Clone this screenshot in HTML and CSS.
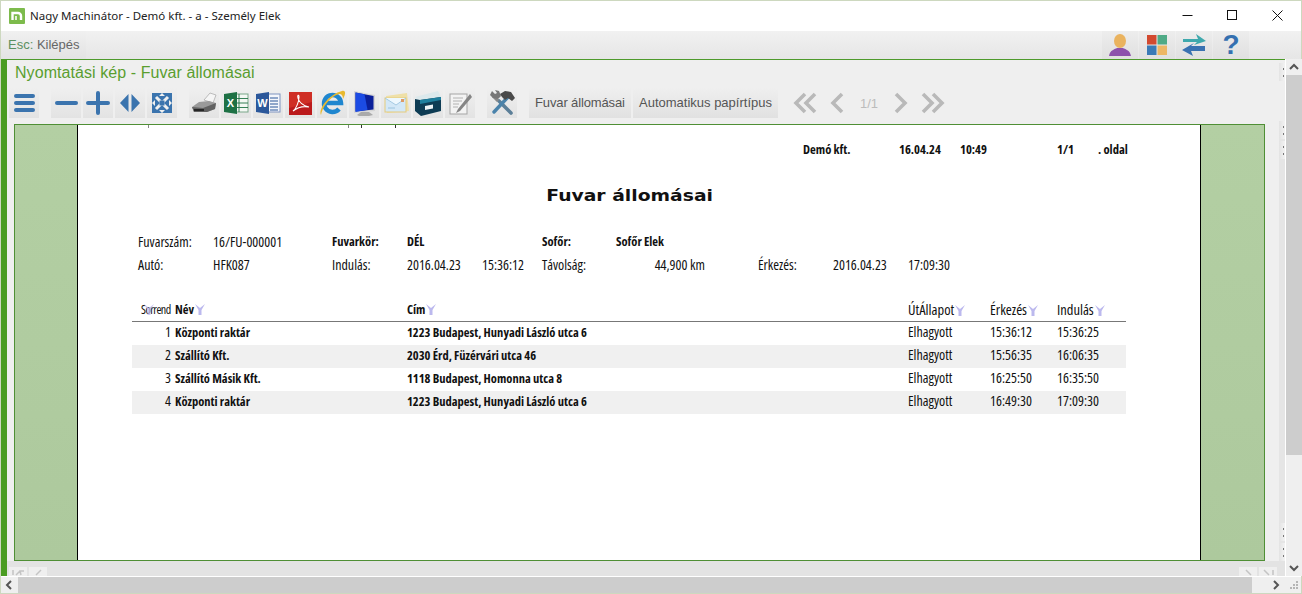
FILE: index.html
```html
<!DOCTYPE html>
<html lang="hu">
<head>
<meta charset="utf-8">
<title>Nagy Machinátor</title>
<link rel="stylesheet" href="styles.css">
</head>
<body>
<div class="window">
  <header class="titlebar">
    <svg class="app-icon" viewBox="0 0 16 16"><rect width="16" height="16" rx="1" fill="#7dbb4c"/><path d="M3.500 12V5h5.500a3 3 0 0 1 3 3v4" fill="none" stroke="#fff" stroke-width="2.400"/><path d="M7 12V8" stroke="#fff" stroke-width="1.600"/></svg>
    <span class="app-title">Nagy Machinátor - Demó kft. - a - Személy Elek</span>
    <div class="win-buttons">
      <span class="win-btn"><svg viewBox="0 0 45 30" width="45" height="30"><path d="M17.500 14.500h10" stroke="#111"/></svg></span>
      <span class="win-btn"><svg viewBox="0 0 45 30" width="45" height="30"><rect x="17.500" y="9.500" width="9" height="9" fill="none" stroke="#111"/></svg></span>
      <span class="win-btn"><svg viewBox="0 0 45 30" width="45" height="30"><path d="M17.500 9.500l10 10m0-10l-10 10" stroke="#111" fill="none"/></svg></span>
    </div>
  </header>

  <nav class="menubar">
    <span class="esc-btn"><span class="esc-key">Esc:</span> Kilépés</span>
    <div class="menu-icons">
      <span class="menu-icon"><svg viewBox="0 0 36 28" width="36" height="28"><ellipse cx="18" cy="10" rx="6" ry="7" fill="#eab35f"/><path d="M7 25c1-6 6-7 8-8h6c2 1 7 2 8 8z" fill="#8d52ac"/></svg></span>
      <span class="menu-icon"><svg viewBox="0 0 36 28" width="36" height="28"><rect x="8" y="4" width="9.500" height="9.500" fill="#d2492f"/><rect x="18.500" y="4" width="9.500" height="9.500" fill="#4faa86"/><rect x="8" y="14.500" width="9.500" height="9.500" fill="#3a7ab6"/><rect x="18.500" y="14.500" width="9.500" height="9.500" fill="#edb765"/></svg></span>
      <span class="menu-icon"><svg viewBox="0 0 36 28" width="36" height="28"><path d="M7 8h15l-2-5 10 7-12 4 3-3H7z" fill="#3fa9ad"/><path d="M29 15H15l3-3-12 7 11 6-2-5h14z" fill="#3a72b2"/></svg></span>
      <span class="menu-icon q-mark">?</span>
    </div>
  </nav>

  <div class="workspace">
    <main class="main">
      <div class="main-row">
        <div class="main-left">
          <div class="panel-top">
            <h1 class="panel-title">Nyomtatási kép - Fuvar állomásai</h1>
            <div class="toolbar">
              <span class="tb-btn"><svg viewBox="0 0 30 30"><g stroke="#3b74ae" stroke-width="4" stroke-linecap="round"><path d="M7 8h17M7 15h17M7 22h17"/></g></svg></span>
              <span class="tb-btn tb-first"><svg viewBox="0 0 30 30"><path d="M6 15h19" stroke="#3b74ae" stroke-width="4" stroke-linecap="round"/></svg></span>
              <span class="tb-btn"><svg viewBox="0 0 30 30"><path d="M5 15h20M15 5v20" stroke="#3b74ae" stroke-width="4" stroke-linecap="round"/></svg></span>
              <span class="tb-btn"><svg viewBox="0 0 30 30"><path d="M13.500 6v18L5 15zM16.500 6v18L25 15z" fill="#3b74ae"/></svg></span>
              <span class="tb-btn"><svg viewBox="0 0 30 30"><rect x="5" y="5" width="20" height="20" fill="#3b74ae"/><path d="M9 9l12 12M21 9L9 21" stroke="#f0f0f0" stroke-width="3"/><path d="M15 5l3 3h-6zM15 25l3-3h-6zM5 15l3 3v-6zM25 15l-3 3v-6z" fill="#f0f0f0"/><rect x="12.500" y="12.500" width="5" height="5" fill="#3b74ae"/></svg></span>

              <span class="tb-btn tb-first"><svg viewBox="0 0 30 30"><path d="M15 12l6-7 6 2-3 8z" fill="#f5f5f5" stroke="#a5a5a5" stroke-width=".7"/><path d="M3 19l7-5 10-1 7 2-1 6-8 3-13 0z" fill="#9a9a9a"/><path d="M3 19l11 1 13-5-1 6-8 3-13 0z" fill="#616161"/><path d="M5 21h10v2H5z" fill="#262626"/></svg></span>
              <span class="tb-btn"><svg viewBox="0 0 30 30"><rect x="12" y="6" width="15" height="18" fill="#f4f8f4" stroke="#7aa78a"/><path d="M18 6v18M12 10.500h15M12 15h15M12 19.500h15" stroke="#217346" stroke-width=".9"/><path d="M3 6l13-2v22L3 24z" fill="#1e7145"/><text x="9.500" y="19" text-anchor="middle" class="office-letter">X</text></svg></span>
              <span class="tb-btn"><svg viewBox="0 0 30 30"><rect x="12" y="6" width="15" height="18" fill="#f4f6fb" stroke="#7f93bf"/><path d="M17 10h8M17 13h8M17 16h8M17 19h8M17 22h8" stroke="#2b579a" stroke-width="1.200"/><path d="M3 6l13-2v22L3 24z" fill="#2b579a"/><text x="9.500" y="19" text-anchor="middle" class="office-letter">W</text></svg></span>
              <span class="tb-btn"><svg viewBox="0 0 30 30"><rect x="4" y="4" width="23" height="23" fill="#bb1a1c"/><path d="M4 4h23v10L4 20z" fill="#cf2e25"/><path d="M8 23c3-2 6-9 6-14 0-3-2-2-1 1 1 4 5 8 11 9-5-1-11 0-16 4z" fill="none" stroke="#fff" stroke-width="1.100"/></svg></span>
              <span class="tb-btn"><svg viewBox="0 0 30 30"><path d="M7 15h17a8.500 8.500 0 1 0-2 6" fill="none" stroke="#1f86cf" stroke-width="4.500"/><path d="M4 27C1 20 13 6 25 3c4-1 4 3 1 8 0-3-1-5-4-5C13 8 5 20 4 27z" fill="#e8b92f"/></svg></span>
              <span class="tb-btn"><svg viewBox="0 0 30 30"><path d="M5 3l21 4v16L5 25z" fill="#d5d5d5"/><path d="M6.500 4.500l18 3.500v13.500l-18 2z" fill="#0a1f9a"/><path d="M6.500 4.500l9 1.700 3 15.500-12 2.300z" fill="#1b4be4"/><path d="M12 24h8l4 3-4 1H10l-2-1z" fill="#aaa"/></svg></span>
              <span class="tb-btn"><svg viewBox="0 0 30 30"><path d="M5 8l21-3 2 18-22 2z" fill="#efe0a8"/><rect x="4" y="10" width="21" height="14" fill="#d3e8f7" stroke="#e5cb7c"/><path d="M4 10l11 7 10-7" fill="#eef8fe" stroke="#96c0dc" stroke-width=".8"/><path d="M7 20h7" stroke="#9cc4de"/><rect x="20" y="11" width="3" height="3" fill="#dd9a66"/></svg></span>
              <span class="tb-btn"><svg viewBox="0 0 30 30"><path d="M2 9l23-6 3 6L5 13z" fill="#dce9ec"/><path d="M2 11l5 1 21-3v14L8 28l-6-5z" fill="#0e3c54"/><path d="M7 12l21-3v3L7 16z" fill="#1f7f9d"/><path d="M12 18l8-1.500v4l-8 1.500z" fill="#eef3f5"/></svg></span>
              <span class="tb-btn"><svg viewBox="0 0 30 30"><rect x="5" y="6" width="17" height="20" fill="#f3f3f3" stroke="#a5a5a5"/><path d="M8 10h10M8 13h9M8 16h6M8 19h5" stroke="#b2b2b2"/><path d="M13 21l-2 4 4-2 12-14-2-3z" fill="#858585"/></svg></span>

              <span class="tb-btn tb-group"><svg viewBox="0 0 30 30"><path d="M12 13l12 12" stroke="#5c7f98" stroke-width="3.600" stroke-linecap="round"/><path d="M11 13L6 8" stroke="#888" stroke-width="3"/><path d="M3 7l2-4 3 3 2-1-2-3 4 1 2 5-3 3-5-1z" fill="#777"/><path d="M21 9L7 24" stroke="#4a83ab" stroke-width="3.400" stroke-linecap="round"/><path d="M13 6l5-3 6 1 4 6-3 3-4-3-3 2-3-3z" fill="#4a4a4a"/></svg></span>

              <span class="tb-text tb-text-first">Fuvar állomásai</span>
              <span class="tb-text">Automatikus papírtípus</span>

              <div class="pager">
                <svg class="pg-icon" viewBox="0 0 32 30"><path d="M16 6l-9 9 9 9M26 6l-9 9 9 9" fill="none" stroke="#b9b9b9" stroke-width="3.600"/></svg>
                <svg class="pg-icon" viewBox="0 0 32 30"><path d="M21 6l-9 9 9 9" fill="none" stroke="#b9b9b9" stroke-width="3.600"/></svg>
                <span class="pg-num">1/1</span>
                <svg class="pg-icon" viewBox="0 0 32 30"><path d="M11 6l9 9-9 9" fill="none" stroke="#b9b9b9" stroke-width="3.600"/></svg>
                <svg class="pg-icon" viewBox="0 0 32 30"><path d="M6 6l9 9-9 9M16 6l9 9-9 9" fill="none" stroke="#b9b9b9" stroke-width="3.600"/></svg>
              </div>
            </div>
          </div>

          <section class="viewer">
            <div class="margin margin-left"></div>
            <article class="page">
              <div class="clip-marks"><i></i><i></i><i></i><i></i></div>
              <div class="page-head">
                <span>Demó kft.</span><span>16.04.24</span><span>10:49</span><span>1/1</span><span>. oldal</span>
              </div>
              <h2 class="report-title">Fuvar állomásai</h2>
              <div class="info">
                <span>Fuvarszám:</span><span>16/FU-000001</span><b>Fuvarkör:</b><b>DÉL</b><span></span><b>Sofőr:</b><b class="wide">Sofőr Elek</b>
                <span>Autó:</span><span>HFK087</span><span>Indulás:</span><span>2016.04.23</span><span>15:36:12</span><span>Távolság:</span><span class="km">44,900 km</span><span>Érkezés:</span><span>2016.04.23</span><span>17:09:30</span>
              </div>
              <table class="stops">
                <colgroup><col class="c-ord"><col class="c-name"><col class="c-addr"><col class="c-state"><col class="c-arr"><col class="c-dep"></colgroup>
                <thead>
                  <tr>
                    <th class="ord-head">Sorrend<svg class="funnel funnel-over" viewBox="0 0 10 11"><path d="M0 0l5 4 5-4-3.500 6v5h-3V6z"/></svg></th>
                    <th class="strong">Név<svg class="funnel" viewBox="0 0 10 11"><path d="M0 0l5 4 5-4-3.500 6v5h-3V6z"/></svg></th>
                    <th class="strong">Cím<svg class="funnel" viewBox="0 0 10 11"><path d="M0 0l5 4 5-4-3.500 6v5h-3V6z"/></svg></th>
                    <th>ÚtÁllapot<svg class="funnel" viewBox="0 0 10 11"><path d="M0 0l5 4 5-4-3.500 6v5h-3V6z"/></svg></th>
                    <th>Érkezés<svg class="funnel" viewBox="0 0 10 11"><path d="M0 0l5 4 5-4-3.500 6v5h-3V6z"/></svg></th>
                    <th>Indulás<svg class="funnel" viewBox="0 0 10 11"><path d="M0 0l5 4 5-4-3.500 6v5h-3V6z"/></svg></th>
                  </tr>
                </thead>
                <tbody>
                  <tr><td class="ord">1</td><td class="strong">Központi raktár</td><td class="strong">1223 Budapest, Hunyadi László utca 6</td><td>Elhagyott</td><td>15:36:12</td><td>15:36:25</td></tr>
                  <tr><td class="ord">2</td><td class="strong">Szállító Kft.</td><td class="strong">2030 Érd, Füzérvári utca 46</td><td>Elhagyott</td><td>15:56:35</td><td>16:06:35</td></tr>
                  <tr><td class="ord">3</td><td class="strong">Szállító Másik Kft.</td><td class="strong">1118 Budapest, Homonna utca 8</td><td>Elhagyott</td><td>16:25:50</td><td>16:35:50</td></tr>
                  <tr><td class="ord">4</td><td class="strong">Központi raktár</td><td class="strong">1223 Budapest, Hunyadi László utca 6</td><td>Elhagyott</td><td>16:49:30</td><td>17:09:30</td></tr>
                </tbody>
              </table>
            </article>
            <div class="margin"></div>
          </section>
        </div>

        <div class="side-pager">
          <div class="side-group"><i></i></div>
          <div class="side-group"><i></i><i></i></div>
          <div class="side-group side-end"><i></i><i></i></div>
        </div>
      </div>

      <div class="bottom-pager">
        <div class="bp-group">
          <svg class="bp" viewBox="0 0 18 9"><path d="M7 8l4-4M12 8l-1-4 4 0M4 3v5" fill="none" stroke="#c4c4c4" stroke-width="1.500"/></svg>
          <svg class="bp" viewBox="0 0 18 9"><path d="M7 8l5-5" fill="none" stroke="#c4c4c4" stroke-width="1.500"/></svg>
        </div>
        <div class="bp-group">
          <svg class="bp" viewBox="0 0 18 9"><path d="M7 3l5 5" fill="none" stroke="#c4c4c4" stroke-width="1.500"/></svg>
          <svg class="bp" viewBox="0 0 18 9"><path d="M5 3l5 5M14 3v5" fill="none" stroke="#c4c4c4" stroke-width="1.500"/></svg>
        </div>
      </div>
    </main>

    <aside class="vscroll">
      <span class="sb-arrow"><svg viewBox="0 0 16 16" width="16" height="16"><path d="M4 10l4-4 4 4" fill="none" stroke="#555" stroke-width="2"/></svg></span>
      <div class="v-thumb"></div>
      <div class="v-rest"></div>
      <span class="sb-arrow"><svg viewBox="0 0 16 16" width="16" height="16"><path d="M4 6l4 4 4-4" fill="none" stroke="#555" stroke-width="2"/></svg></span>
    </aside>
  </div>

  <div class="hscroll">
    <span class="sb-arrow sb-left"><svg viewBox="0 0 16 16" width="16" height="16"><path d="M10 4L6 8l4 4" fill="none" stroke="#555" stroke-width="2"/></svg></span>
    <div class="h-thumb"></div>
    <span class="sb-arrow h-right"><svg viewBox="0 0 16 16" width="16" height="16"><path d="M6 4l4 4-4 4" fill="none" stroke="#555" stroke-width="2"/></svg></span>
    <svg class="grip" viewBox="0 0 12 12" width="12" height="12"><path d="M8 2h2v2H8zM5 5h2v2H5zM8 5h2v2H8zM2 8h2v2H2zM5 8h2v2H5zM8 8h2v2H8z" fill="#b5b5b5"/></svg>
  </div>
</div>
</body>
</html>
```
FILE: styles.css
```css
* { box-sizing: border-box; }
html, body { margin: 0; padding: 0; overflow: hidden; }
body { width: 1302px; height: 594px; font-family: "Liberation Sans", Arial, sans-serif; background: #fff; }

.window { width: 1302px; height: 594px; border: 1px solid #cdd8bf; display: flex; flex-direction: column; background: #efefef; }

.titlebar { height: 30px; flex: none; background: #fff; display: flex; align-items: center; padding: 0 0 1px 8px; }
.app-icon { width: 16px; height: 16px; flex: none; }
.app-title { margin-left: 5px; font: 11.500px "Noto Sans", "Open Sans", sans-serif; color: #222; }
.win-buttons { margin-left: auto; margin-right: 1px; display: flex; align-self: flex-start; }
.win-btn { width: 45px; height: 30px; display: block; }
.win-btn svg { display: block; }

.menubar { height: 28px; flex: none; display: flex; background: linear-gradient(#f1f1f1, #e6e6e6); }
.esc-btn { width: 85px; padding-left: 7px; line-height: 28px; font-size: 13px; color: #666; background: linear-gradient(#f0f0f0, #e3e3e3); }
.esc-key { color: #5b9060; }
.menu-icons { margin-left: auto; margin-right: 52px; display: flex; gap: 1px; }
.menu-icon { width: 36px; height: 28px; background: linear-gradient(#ededed, #e0e0e0); }
.menu-icon svg { display: block; }
.q-mark { text-align: center; font: bold 28px/28px "Liberation Sans", sans-serif; color: #3470b0; }

.workspace { flex: 1; min-height: 0; display: flex; }
.main { width: 1284px; display: flex; flex-direction: column; border-top: 1px solid #4d9a2b; border-left: 6px solid #4a9c22; }
.main-row { flex: 1; min-height: 0; display: flex; }
.main-left { width: 1272px; flex: none; display: flex; flex-direction: column; }

.panel-top { flex: none; height: 64px; padding-left: 2px; background: #efefef; display: flex; flex-direction: column; }
.panel-title { margin: 4px 0 0 6px; height: 24px; font: normal 16px/18px "Liberation Sans", sans-serif; letter-spacing: .07px; color: #5a9e2f; }
.toolbar { display: flex; gap: 2px; height: 30px; }
.tb-btn { width: 30px; height: 30px; flex: none; background: linear-gradient(#efefef, #e3e3e3); }
.tb-btn svg { display: block; width: 30px; height: 30px; }
.tb-first { margin-left: 10px; }
.tb-group { margin-left: 10px; }
.tb-text { height: 30px; padding: 0 6px; line-height: 30px; font-size: 13px; color: #555; background: linear-gradient(#efefef, #e1e1e1); white-space: nowrap; }
.tb-text-first { margin-left: 10px; width: 102px; letter-spacing: -.13px; }
.office-letter { font: bold 11px "Liberation Sans", sans-serif; fill: #fff; }

.pager { display: flex; align-items: center; margin-left: 9px; }
.pg-icon { width: 32px; height: 30px; flex: none; }
.pg-num { width: 32px; text-align: center; font-size: 13px; color: #bcbcbc; }

.viewer { width: 1251px; margin-left: 7px; display: flex; border: 1px solid #4f8f35; background: #b3cfa3; height: 438px; }
.margin { flex: 1; background: linear-gradient(#b3cfa3, #adc99d); }
.margin-left { flex: none; width: 62px; }
.page { width: 1124px; flex: none; background: #fff; border-left: 1px solid #000; border-right: 1px solid #000; font: 14px "Open Sans", sans-serif; font-stretch: 75%; color: #111; overflow: hidden; }

.clip-marks { height: 3px; display: flex; padding-left: 70px; }
.clip-marks i { width: 1px; height: 3px; background: #888; }
.clip-marks i:nth-child(2) { margin-left: 199px; }
.clip-marks i:nth-child(3) { margin-left: 12px; background: #333; }
.clip-marks i:nth-child(4) { margin-left: 33px; background: #333; }

.page-head { display: grid; grid-template-columns: 96px 61px 97px 41px auto; margin: 10px 0 0 725px; height: 23px; line-height: 23px; font-size: 12.600px; font-weight: bold; }

.report-title { margin: 24px 0 0; height: 23px; text-align: center; font: bold 15px/23px "DejaVu Sans", sans-serif; color: #111; padding-right: 15px; transform: scaleX(1.250); }

.info { display: grid; grid-template-columns: 75px 119px 75px 75px 60px 74px 142px 75px 75px 70px; grid-auto-rows: 23px; line-height: 23px; margin: 22px 0 0 60px; }
.info b { font-size: 12.500px; font-weight: bold; }
.info .wide { grid-column: span 4; }
.km { text-align: right; padding-right: 53px; }

.stops { table-layout: fixed; width: 994px; margin: 26px 0 0 54px; border-collapse: collapse; }
.c-ord { width: 43px; } .c-name { width: 232px; } .c-addr { width: 501px; } .c-state { width: 82px; } .c-arr { width: 67px; } .c-dep { width: 69px; }
.stops th { height: 19px; padding: 0 0 4px; text-align: left; font-size: 14.500px; line-height: 15px; font-weight: normal; border-bottom: 1px solid #777; white-space: nowrap; }
.stops td { height: 23px; padding: 0 0 3px; line-height: 20px; }
.stops tbody tr:nth-child(even) { background: #f0f0f0; }
.stops .strong { font-size: 12.500px; font-weight: bold; }
.stops td.strong { padding-bottom: 2px; line-height: 21px; }
.stops .ord { text-align: right; padding-right: 4px; }
.stops .ord-head { position: relative; padding-left: 9px; font-size: 12px; letter-spacing: -.5px; }
.funnel { width: 10px; height: 11px; margin-left: 1px; vertical-align: -1px; fill: #bcb9ee; }
.funnel-over { position: absolute; left: 12px; top: 2px; margin: 0; opacity: .75; }

.side-pager { flex: 1; display: flex; flex-direction: column; align-items: flex-end; background: linear-gradient(#efefef 64px, #e5e5e5 64px); }
.side-group { display: flex; flex-direction: column; gap: 2px; }
.side-group:first-child { margin-top: 3px; }
.side-group:nth-child(2) { margin-top: 40px; }
.side-end { margin-top: auto; }
.side-group i { width: 6px; height: 18px; background: linear-gradient(#777, #777) no-repeat 4px 5px / 1px 2px, linear-gradient(#777, #777) no-repeat 4px 12px / 1px 2px, linear-gradient(90deg, #e3e3e3, #f3f3f3); }

.bottom-pager { height: 15px; flex: none; display: flex; justify-content: space-between; padding: 6px 8px 0 2px; background: #e3e3e3; }
.bp-group { display: flex; gap: 2px; }
.bp { width: 18px; height: 9px; background: #efefef; display: block; }

.vscroll { flex: 1; display: flex; flex-direction: column; border-left: 1px solid #fff; background: #efefef; }
.sb-arrow { width: 16px; height: 16px; flex: none; display: block; }
.sb-arrow svg { display: block; }
.v-thumb { height: 380px; background: #cdcdcd; }
.v-rest { flex: 1; }

.hscroll { height: 17px; flex: none; display: flex; align-items: center; border-top: 1px solid #fff; background: #efefef; }
.sb-left { width: 17px; }
.h-thumb { width: 1234px; height: 16px; background: #cdcdcd; }
.h-right { margin-left: 16px; }
.grip { margin-left: auto; margin-right: 1px; }
```
